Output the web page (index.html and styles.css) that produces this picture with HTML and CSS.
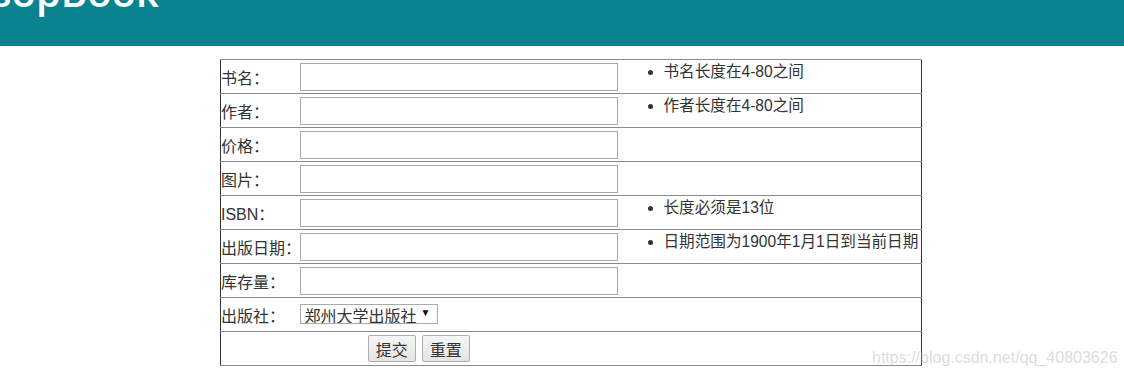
FILE: index.html
```html
<!DOCTYPE html>
<html lang="zh-CN">
<head>
<meta charset="utf-8">
<title>添加图书</title>
<link rel="stylesheet" href="styles.css">
</head>
<body>
<header class="topbar"><h1 class="brand">JsopBook</h1></header>
<main class="page">
  <form class="book-form">
    <table class="form-table">
      <colgroup><col class="c-label"><col class="c-field"><col class="c-hint"></colgroup>
      <tr>
        <td class="label">书名：</td>
        <td class="field"><input class="text-input" type="text"></td>
        <td class="hint"><ul><li>书名长度在4-80之间</li></ul></td>
      </tr>
      <tr>
        <td class="label">作者：</td>
        <td class="field"><input class="text-input" type="text"></td>
        <td class="hint"><ul><li>作者长度在4-80之间</li></ul></td>
      </tr>
      <tr>
        <td class="label">价格：</td>
        <td class="field"><input class="text-input" type="text"></td>
        <td class="hint"></td>
      </tr>
      <tr>
        <td class="label">图片：</td>
        <td class="field"><input class="text-input" type="text"></td>
        <td class="hint"></td>
      </tr>
      <tr>
        <td class="label">ISBN：</td>
        <td class="field"><input class="text-input" type="text"></td>
        <td class="hint"><ul><li>长度必须是13位</li></ul></td>
      </tr>
      <tr>
        <td class="label">出版日期：</td>
        <td class="field"><input class="text-input" type="text"></td>
        <td class="hint"><ul><li>日期范围为1900年1月1日到当前日期</li></ul></td>
      </tr>
      <tr>
        <td class="label">库存量：</td>
        <td class="field"><input class="text-input" type="text"></td>
        <td class="hint"></td>
      </tr>
      <tr>
        <td class="label">出版社：</td>
        <td class="field">
          <span class="select-wrap"><select class="select"><option>郑州大学出版社</option></select></span>
        </td>
        <td class="hint"></td>
      </tr>
      <tr>
        <td class="actions" colspan="2"><button class="btn" type="submit">提交</button><button class="btn" type="reset">重置</button></td>
        <td class="hint"></td>
      </tr>
    </table>
  </form>
</main>
<div class="watermark">https://blog.csdn.net/qq_40803626</div>
</body>
</html>
```
FILE: styles.css
```css
html, body {
  margin: 0;
  padding: 0;
  background: #fff;
}
body {
  font-family: "Liberation Sans", "Noto Sans CJK SC", sans-serif;
  font-size: 16px;
  color: #333;
  position: relative;
  height: 381px;
  overflow: hidden;
}
.topbar {
  height: 46px;
  background: #0b828f;
  overflow: hidden;
}
.brand {
  margin: -28px 0 0 -20px;
  font-family: "Open Sans", sans-serif;
  font-weight: 600;
  font-size: 40px;
  line-height: 40px;
  color: #fff;
  white-space: nowrap;
}
.page {
  padding: 13px 0 0 220px;
}
.form-table {
  border-collapse: collapse;
  width: 702px;
  table-layout: fixed;
  border-left: 1px solid #333;
  border-right: 1px solid #333;
}
.c-label { width: 79px; }
.c-field { width: 321px; }
.form-table tr {
  height: 34px;
  border-top: 1px solid #8a8a8a;
  border-bottom: 1px solid #8a8a8a;
}
.form-table td {
  padding: 0;
  vertical-align: middle;
  white-space: nowrap;
}
.text-input {
  display: block;
  box-sizing: border-box;
  width: 318px;
  height: 28px;
  margin: 0;
  padding: 0 2px;
  border: 1px solid #a9a9a9;
  font: inherit;
}
.hint {
  vertical-align: top !important;
  overflow: hidden;
}
.hint ul {
  margin: 2px 0 0 0;
  padding-left: 43px;
  line-height: 20px;
  font-size: 15.6px;
}
.select-wrap {
  position: relative;
  display: inline-block;
  vertical-align: middle;
}
.select-wrap::after {
  content: "▼";
  position: absolute;
  right: 7px;
  top: 3px;
  font-size: 10px;
  color: #111;
  pointer-events: none;
}
.select {
  -webkit-appearance: none;
  appearance: none;
  box-sizing: border-box;
  width: 138px;
  height: 20px;
  margin: 0;
  padding: 3px 0 0 4px;
  border: 1px solid #a9a9a9;
  border-radius: 0;
  background: #fff;
  font: inherit;
  line-height: 18px;
  color: #333;
}
.actions {
  text-align: center;
  padding-right: 4px !important;
}
.btn {
  box-sizing: border-box;
  width: 48px;
  height: 27px;
  margin: 0 3px;
  padding: 0;
  border: 1px solid #adadad;
  border-radius: 2px;
  background: linear-gradient(#f6f6f6, #e4e4e4);
  font: inherit;
  color: #333;
  vertical-align: middle;
}
.watermark {
  position: absolute;
  left: 872px;
  top: 349px;
  font-family: "Liberation Sans", sans-serif;
  font-size: 16px;
  color: rgba(175, 175, 175, 0.45);
  white-space: nowrap;
}
```
